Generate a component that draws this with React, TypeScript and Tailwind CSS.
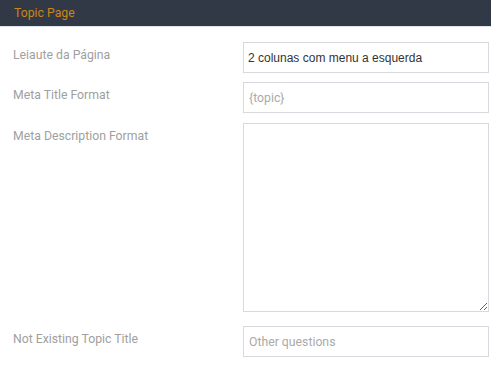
export default function App() {
  const rows = [
    { label: "Meta Title Format", placeholder: "{topic}" },
  ];
  return (
    <div className="w-[491px] h-[366px] bg-white font-['Roboto',sans-serif] text-[12.25px] leading-[18px] overflow-hidden">
      <div className="h-[27px] bg-[#323946] border-b border-[#dfe3ea] pl-[14px] pb-[1px] flex items-center text-[#c8861c]">
        Topic Page
      </div>
      <div className="pt-[15px] pr-[2px] pl-[13px] flex flex-col gap-[9px]">
        <div className="flex">
          <div className="w-[230px] pt-[4px] text-[#a0a0a0]">Leiaute da Página</div>
          <div className="w-[246px] h-[31px] border border-[#d8d8de] flex items-center pl-[4px] pt-[1px] font-['Liberation_Sans',Arial,sans-serif] text-[12px] text-[#333]">
            2 colunas com menu a esquerda
          </div>
        </div>
        {rows.map((r) => (
          <div key={r.label} className="flex">
            <div className="w-[230px] pt-[4px] text-[#a0a0a0]">{r.label}</div>
            <input
              className="w-[246px] h-[31px] border border-[#d8d8de] px-[5px] outline-none placeholder:text-[#aaa] text-[#333]"
              placeholder={r.placeholder}
            />
          </div>
        ))}
        <div className="flex mt-[1px]">
          <div className="w-[230px] pt-[4px] text-[#a0a0a0]">Meta Description Format</div>
          <textarea className="w-[246px] h-[189px] border border-[#d8d8de] outline-none block" />
        </div>
        <div className="flex mt-[5px]">
          <div className="w-[230px] pt-[4px] text-[#a0a0a0]">Not Existing Topic Title</div>
          <input
            className="w-[246px] h-[31px] border border-[#d8d8de] px-[5px] outline-none placeholder:text-[#aaa] text-[#333]"
            placeholder="Other questions"
          />
        </div>
      </div>
    </div>
  );
}
